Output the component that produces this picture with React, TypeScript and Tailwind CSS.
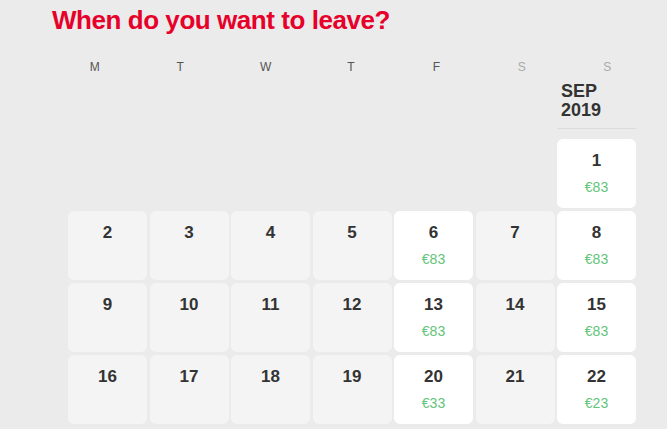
import React from "react";

interface Day {
  day: number;
  price?: string;
}

const weekDays = [
  { label: "M", weekend: false },
  { label: "T", weekend: false },
  { label: "W", weekend: false },
  { label: "T", weekend: false },
  { label: "F", weekend: false },
  { label: "S", weekend: true },
  { label: "S", weekend: true },
];

const weeks: Day[][] = [
  [
    { day: 2 },
    { day: 3 },
    { day: 4 },
    { day: 5 },
    { day: 6, price: "€83" },
    { day: 7 },
    { day: 8, price: "€83" },
  ],
  [
    { day: 9 },
    { day: 10 },
    { day: 11 },
    { day: 12 },
    { day: 13, price: "€83" },
    { day: 14 },
    { day: 15, price: "€83" },
  ],
  [
    { day: 16 },
    { day: 17 },
    { day: 18 },
    { day: 19 },
    { day: 20, price: "€33" },
    { day: 21 },
    { day: 22, price: "€23" },
  ],
];

function DayCell({ item }: { item: Day }) {
  return (
    <div
      className={`h-[69px] rounded-[6px] flex flex-col items-center pt-[12px] ${
        item.price ? "bg-white" : "bg-[#f4f4f4]"
      }`}
    >
      <span className="text-[17px] leading-[20px] font-bold text-[#333333]">
        {item.day}
      </span>
      {item.price && (
        <span className="mt-[8px] text-[14px] leading-[16px] text-[#62c47a]">
          {item.price}
        </span>
      )}
    </div>
  );
}

export default function App() {
  return (
    <div className="w-[667px] h-[429px] overflow-hidden bg-[#ebebeb] pl-[52px] pt-[7px] font-['Liberation_Sans',Arial,sans-serif]">
      <h1 className="text-[26px] leading-[26px] font-bold tracking-[-0.45px] text-[#e6002a]">
        When do you want to leave?
      </h1>

      {/* weekday header */}
      <div className="mt-[28px] w-[598px] grid grid-cols-7 text-center text-[12px] leading-[12px]">
        {weekDays.map((d, i) => (
          <span
            key={i}
            className={d.weekend ? "text-[#aaaaaa]" : "text-[#555555]"}
          >
            {d.label}
          </span>
        ))}
      </div>

      <div className="ml-[16px] mt-[9px] w-[568px] grid grid-cols-7 gap-x-[2.5px] gap-y-[3px]">
        {/* first week: only sunday */}
        <div className="col-start-7 flex flex-col">
          <div className="text-[18px] leading-[19px] font-bold text-[#333333] pl-[4px]">
            SEP
            <br />
            2019
          </div>
          <div className="mt-[8px] h-px bg-[#dcdcdc]" />
          <div className="mt-[10px]">
            <DayCell item={{ day: 1, price: "€83" }} />
          </div>
        </div>

        {weeks.map((week) =>
          week.map((item) => <DayCell key={item.day} item={item} />)
        )}
      </div>
    </div>
  );
}
